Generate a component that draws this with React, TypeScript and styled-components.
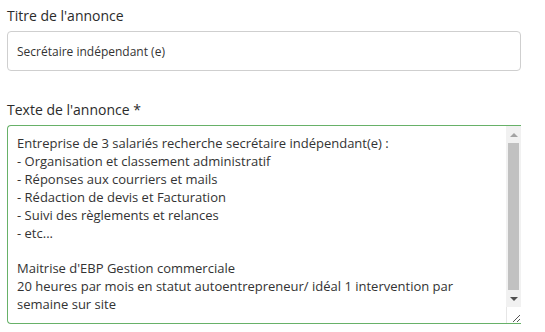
import React from "react";
import styled, { createGlobalStyle } from "styled-components";

const Global = createGlobalStyle`
  html, body { margin: 0; padding: 0; background: #fff; }
  body { font-family: "Open Sans", "DejaVu Sans", sans-serif; color: #333; }
`;

const Page = styled.div`
  width: 545px;
  height: 332px;
  padding: 6px 24px 0 7px;
  box-sizing: border-box;
  display: flex;
  flex-direction: column;
`;

const Field = styled.div<{ $gap?: number }>`
  display: flex;
  flex-direction: column;
  margin-bottom: ${(p) => p.$gap ?? 0}px;
`;

const Label = styled.label`
  font-size: 14px;
  line-height: 20px;
  color: #2b2b2b;
  margin-bottom: 5px;
`;

const TextInput = styled.div`
  height: 40px;
  box-sizing: border-box;
  border: 1px solid #cfcfcf;
  border-radius: 4px;
  padding: 0 9px;
  display: flex;
  align-items: center;
  font-size: 12px;
  color: #333;
`;

const AreaBox = styled.div`
  height: 199px;
  box-sizing: border-box;
  border: 1px solid #67b168;
  border-right: none;
  border-radius: 4px 0 0 4px;
  display: flex;
  overflow: hidden;
`;

const AreaText = styled.div`
  flex: 1;
  padding: 9px 9px 0 9px;
  font-size: 13px;
  line-height: 17.9px;
  color: #333;
  white-space: pre-wrap;
`;

const ScrollBar = styled.div`
  width: 15px;
  display: flex;
  flex-direction: column;
  background: #f1f1f1;
`;

const ArrowBtn = styled.div<{ $dark?: boolean }>`
  height: 17px;
  display: flex;
  align-items: center;
  justify-content: center;
  color: ${(p) => (p.$dark ? "#505050" : "#a3a3a3")};
`;

const Track = styled.div`
  flex: 1;
  display: flex;
  padding: 0 2px;
`;

const Thumb = styled.div`
  flex: 1;
  background: #c1c1c1;
`;

const Resizer = styled.div`
  height: 16px;
  background: #fff;
  border-left: 1px solid #e6e6e6;
  display: flex;
  align-items: flex-end;
  justify-content: flex-end;
`;

const text = `Entreprise de 3 salariés recherche secrétaire indépendant(e) :
- Organisation et classement administratif
- Réponses aux courriers et mails
- Rédaction de devis et Facturation
- Suivi des règlements et relances
- etc...

Maitrise d'EBP Gestion commerciale
20 heures par mois en statut autoentrepreneur/ idéal 1 intervention par semaine sur site`;

export default function App() {
  return (
    <>
      <Global />
      <Page>
        <Field $gap={29}>
          <Label>Titre de l'annonce</Label>
          <TextInput>Secrétaire indépendant (e)</TextInput>
        </Field>
        <Field>
          <Label>Texte de l'annonce *</Label>
          <AreaBox>
            <AreaText>{text}</AreaText>
            <ScrollBar>
              <ArrowBtn>
                <svg width="8" height="4" viewBox="0 0 8 4">
                  <path d="M0 4 L4 0 L8 4 Z" fill="currentColor" />
                </svg>
              </ArrowBtn>
              <Track>
                <Thumb />
              </Track>
              <ArrowBtn $dark>
                <svg width="8" height="4" viewBox="0 0 8 4">
                  <path d="M0 0 L8 0 L4 4 Z" fill="currentColor" />
                </svg>
              </ArrowBtn>
              <Resizer>
                <svg width="10" height="10" viewBox="0 0 10 10">
                  <path d="M2 9 L9 2 M6 9 L9 6" stroke="#555" strokeWidth="1" />
                </svg>
              </Resizer>
            </ScrollBar>
          </AreaBox>
        </Field>
      </Page>
    </>
  );
}
